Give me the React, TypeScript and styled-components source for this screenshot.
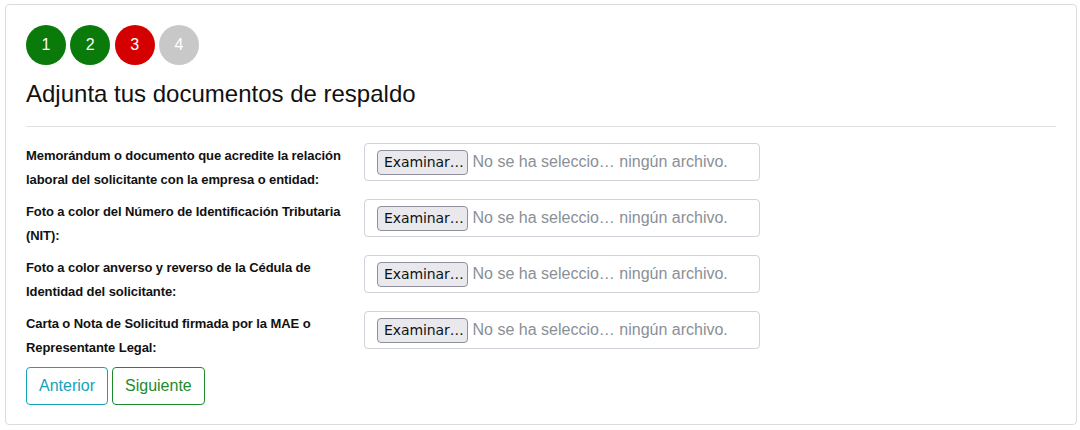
import styled, { createGlobalStyle } from 'styled-components';

const GlobalStyle = createGlobalStyle`
  body {
    margin: 0;
    background: #fff;
    font-family: 'Liberation Sans', Arial, sans-serif;
  }
`;

const Page = styled.div`
  padding: 4px 3px 4px 5px;
`;

const Card = styled.div`
  border: 1px solid #dcdcdc;
  border-radius: 4px;
  padding: 20px;
  height: 421px;
  box-sizing: border-box;
`;

const Steps = styled.div`
  display: flex;
  gap: 4.3px;
`;

const Step = styled.div<{ $bg: string }>`
  width: 40px;
  height: 40px;
  border-radius: 50%;
  background: ${(p) => p.$bg};
  color: #fff;
  font-size: 16px;
  display: flex;
  align-items: center;
  justify-content: center;
`;

const Title = styled.h2`
  margin: 14px 0 0;
  font-size: 24px;
  font-weight: 400;
  line-height: 30px;
  color: #111;
`;

const Divider = styled.hr`
  border: 0;
  border-top: 1px solid #e2e2e2;
  margin: 17px 0 16px;
`;

const FieldRow = styled.div`
  display: flex;
  align-items: flex-start;
  height: 56px;
`;

const Label = styled.label`
  width: 338px;
  font-size: 13px;
  font-weight: 700;
  line-height: 24px;
  letter-spacing: -0.08px;
  color: #111;
  padding-top: 1px;
`;

const FileBox = styled.div`
  width: 396px;
  height: 38px;
  box-sizing: border-box;
  border: 1px solid #ced4da;
  border-radius: 4px;
  display: flex;
  align-items: center;
  padding-left: 12px;
  gap: 5px;
`;

const PickButton = styled.span`
  height: 25px;
  box-sizing: border-box;
  border: 1px solid #8f8f9d;
  border-radius: 4px;
  background: #e9e9ed;
  padding: 0 3px 0 6px;
  display: flex;
  align-items: center;
  font-family: 'DejaVu Sans', sans-serif;
  font-size: 14px;
  letter-spacing: -0.1px;
  color: #111;
`;

const FileStatus = styled.span`
  font-size: 16px;
  color: #8a8f96;
`;

const Actions = styled.div`
  display: flex;
  gap: 4px;
`;

const NavButton = styled.button<{ $color: string }>`
  height: 38px;
  padding: 0 12px;
  border: 1px solid ${(p) => p.$color};
  color: ${(p) => p.$color};
  background: #fff;
  border-radius: 4px;
  font-family: 'Liberation Sans', Arial, sans-serif;
  font-size: 16px;
`;

const steps = [
  { n: 1, bg: '#0a7a0a' },
  { n: 2, bg: '#0a7a0a' },
  { n: 3, bg: '#d40000' },
  { n: 4, bg: '#c8c8c8' },
];

const fields = [
  'Memorándum o documento que acredite la relación laboral del solicitante con la empresa o entidad:',
  'Foto a color del Número de Identificación Tributaria (NIT):',
  'Foto a color anverso y reverso de la Cédula de Identidad del solicitante:',
  'Carta o Nota de Solicitud firmada por la MAE o Representante Legal:',
];

export default function App() {
  return (
    <Page>
      <GlobalStyle />
      <Card>
        <Steps>
          {steps.map((s) => (
            <Step key={s.n} $bg={s.bg}>
              {s.n}
            </Step>
          ))}
        </Steps>
        <Title>Adjunta tus documentos de respaldo</Title>
        <Divider />
        {fields.map((f) => (
          <FieldRow key={f}>
            <Label>{f}</Label>
            <FileBox>
              <PickButton>Examinar…</PickButton>
              <FileStatus>No se ha seleccio… ningún archivo.</FileStatus>
            </FileBox>
          </FieldRow>
        ))}
        <Actions>
          <NavButton $color="#17a2b8">Anterior</NavButton>
          <NavButton $color="#1e8a2e">Siguiente</NavButton>
        </Actions>
      </Card>
    </Page>
  );
}
